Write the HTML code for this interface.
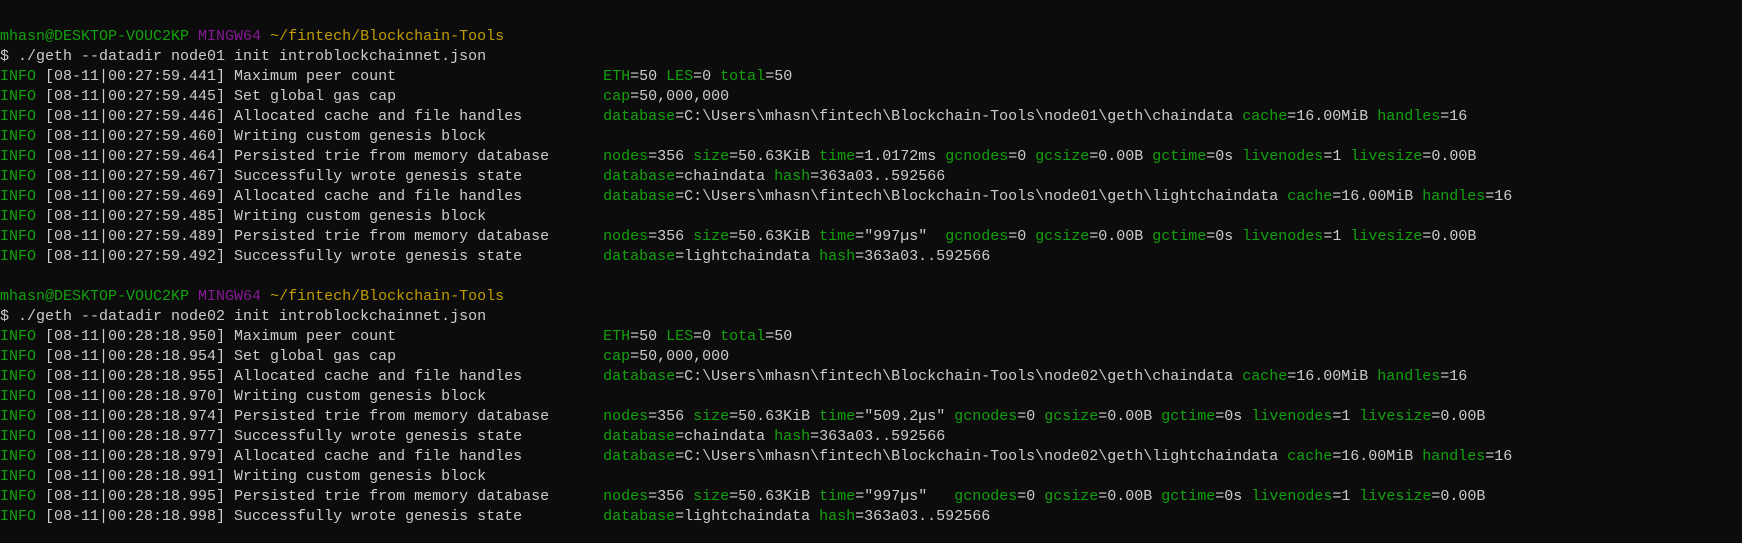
<!DOCTYPE html>
<html><head><meta charset="utf-8"><style>
html,body{margin:0;padding:0;background:#0c0c0c;width:1742px;height:543px;overflow:hidden}
pre{margin:0;padding:27px 0 0 0;font-family:"Liberation Mono","DejaVu Sans Mono",monospace;font-size:15px;line-height:20px;color:#cccccc;white-space:pre}
.g{color:#13a10e}.p{color:#881798}.y{color:#c19c00}
</style></head><body><pre><span class="g">mhasn@DESKTOP-VOUC2KP</span> <span class="p">MINGW64</span> <span class="y">~/fintech/Blockchain-Tools</span>
$ ./geth --datadir node01 init introblockchainnet.json
<span class="g">INFO</span> [08-11|00:27:59.441] Maximum peer count                       <span class="g">ETH</span>=50 <span class="g">LES</span>=0 <span class="g">total</span>=50
<span class="g">INFO</span> [08-11|00:27:59.445] Set global gas cap                       <span class="g">cap</span>=50,000,000
<span class="g">INFO</span> [08-11|00:27:59.446] Allocated cache and file handles         <span class="g">database</span>=C:\Users\mhasn\fintech\Blockchain-Tools\node01\geth\chaindata <span class="g">cache</span>=16.00MiB <span class="g">handles</span>=16
<span class="g">INFO</span> [08-11|00:27:59.460] Writing custom genesis block
<span class="g">INFO</span> [08-11|00:27:59.464] Persisted trie from memory database      <span class="g">nodes</span>=356 <span class="g">size</span>=50.63KiB <span class="g">time</span>=1.0172ms <span class="g">gcnodes</span>=0 <span class="g">gcsize</span>=0.00B <span class="g">gctime</span>=0s <span class="g">livenodes</span>=1 <span class="g">livesize</span>=0.00B
<span class="g">INFO</span> [08-11|00:27:59.467] Successfully wrote genesis state         <span class="g">database</span>=chaindata <span class="g">hash</span>=363a03..592566
<span class="g">INFO</span> [08-11|00:27:59.469] Allocated cache and file handles         <span class="g">database</span>=C:\Users\mhasn\fintech\Blockchain-Tools\node01\geth\lightchaindata <span class="g">cache</span>=16.00MiB <span class="g">handles</span>=16
<span class="g">INFO</span> [08-11|00:27:59.485] Writing custom genesis block
<span class="g">INFO</span> [08-11|00:27:59.489] Persisted trie from memory database      <span class="g">nodes</span>=356 <span class="g">size</span>=50.63KiB <span class="g">time</span>="997µs"  <span class="g">gcnodes</span>=0 <span class="g">gcsize</span>=0.00B <span class="g">gctime</span>=0s <span class="g">livenodes</span>=1 <span class="g">livesize</span>=0.00B
<span class="g">INFO</span> [08-11|00:27:59.492] Successfully wrote genesis state         <span class="g">database</span>=lightchaindata <span class="g">hash</span>=363a03..592566

<span class="g">mhasn@DESKTOP-VOUC2KP</span> <span class="p">MINGW64</span> <span class="y">~/fintech/Blockchain-Tools</span>
$ ./geth --datadir node02 init introblockchainnet.json
<span class="g">INFO</span> [08-11|00:28:18.950] Maximum peer count                       <span class="g">ETH</span>=50 <span class="g">LES</span>=0 <span class="g">total</span>=50
<span class="g">INFO</span> [08-11|00:28:18.954] Set global gas cap                       <span class="g">cap</span>=50,000,000
<span class="g">INFO</span> [08-11|00:28:18.955] Allocated cache and file handles         <span class="g">database</span>=C:\Users\mhasn\fintech\Blockchain-Tools\node02\geth\chaindata <span class="g">cache</span>=16.00MiB <span class="g">handles</span>=16
<span class="g">INFO</span> [08-11|00:28:18.970] Writing custom genesis block
<span class="g">INFO</span> [08-11|00:28:18.974] Persisted trie from memory database      <span class="g">nodes</span>=356 <span class="g">size</span>=50.63KiB <span class="g">time</span>="509.2µs" <span class="g">gcnodes</span>=0 <span class="g">gcsize</span>=0.00B <span class="g">gctime</span>=0s <span class="g">livenodes</span>=1 <span class="g">livesize</span>=0.00B
<span class="g">INFO</span> [08-11|00:28:18.977] Successfully wrote genesis state         <span class="g">database</span>=chaindata <span class="g">hash</span>=363a03..592566
<span class="g">INFO</span> [08-11|00:28:18.979] Allocated cache and file handles         <span class="g">database</span>=C:\Users\mhasn\fintech\Blockchain-Tools\node02\geth\lightchaindata <span class="g">cache</span>=16.00MiB <span class="g">handles</span>=16
<span class="g">INFO</span> [08-11|00:28:18.991] Writing custom genesis block
<span class="g">INFO</span> [08-11|00:28:18.995] Persisted trie from memory database      <span class="g">nodes</span>=356 <span class="g">size</span>=50.63KiB <span class="g">time</span>="997µs"   <span class="g">gcnodes</span>=0 <span class="g">gcsize</span>=0.00B <span class="g">gctime</span>=0s <span class="g">livenodes</span>=1 <span class="g">livesize</span>=0.00B
<span class="g">INFO</span> [08-11|00:28:18.998] Successfully wrote genesis state         <span class="g">database</span>=lightchaindata <span class="g">hash</span>=363a03..592566
</pre></body></html>
